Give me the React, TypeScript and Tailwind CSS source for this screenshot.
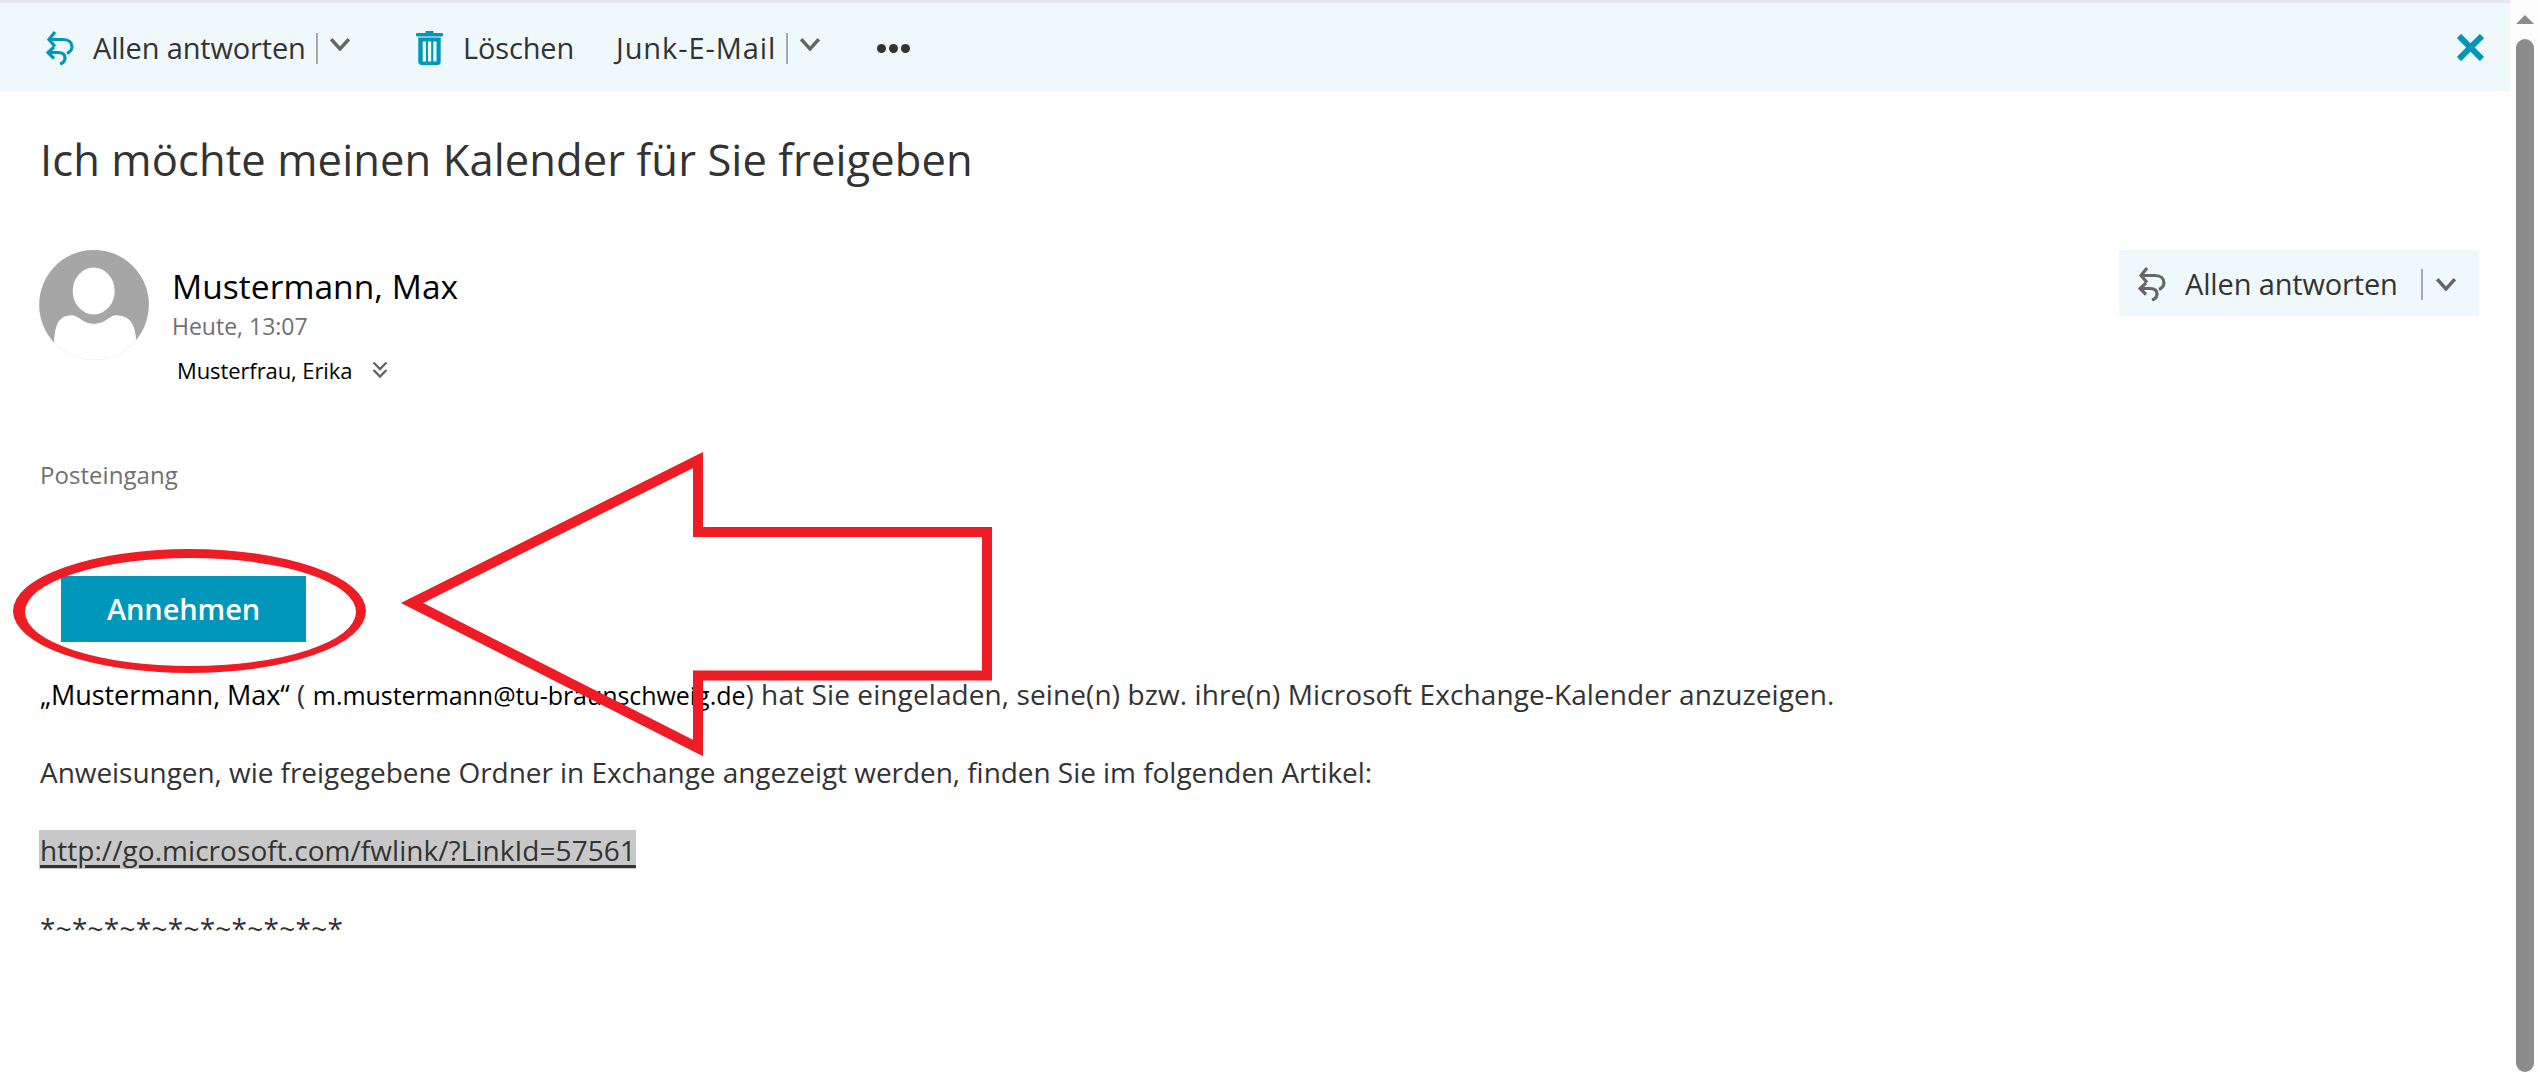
const Reply = ({ className }: { className: string }) => (
  <svg viewBox="0 0 28 34" fill="none" stroke="currentColor" strokeWidth="3.2" className={className}>
    <path d="M9 1 3 8.500 9 15.500" />
    <path d="M3 8.500H17C23 8.500 26 12 26 16 26 19 24 21 21 22.500" />
    <path d="M8 16 2 21.500 8 27.500" />
    <path d="M2 21.500H12C17 21.500 19 24 19 27 19 30 17 32 14 33" />
  </svg>
);

const Chevron = ({ className }: { className: string }) => (
  <svg viewBox="0 0 20 13" fill="none" stroke="currentColor" strokeWidth="3.4" className={className}>
    <path d="M1.200 1.200 10 11l8.800-9.800" />
  </svg>
);

const Trash = () => (
  <svg viewBox="0 0 27 34" fill="#0097bb" className="block h-[34px] w-[27px]">
    <path d="M9.500 0h8v2h8a1.500 1.500 0 0 1 0 3.500H1.500a1.500 1.500 0 0 1 0-3.500h8z" />
    <path
      fillRule="evenodd"
      d="M2.300 6.500H24.700V30.500A3.500 3.500 0 0 1 21.200 34H5.800A3.500 3.500 0 0 1 2.300 30.500zM6.700 10.500V30.500H10V10.500zM12 10.500V30.500H15.200V10.500zM17.300 10.500V30.500H20.500V10.500z"
    />
  </svg>
);

const Avatar = () => (
  <svg viewBox="0 0 110 110" className="block h-[110px] w-[110px] shrink-0">
    <circle cx="55" cy="55" r="55" fill="#e6e6e6" />
    <path
      d="M15.300 92.500A54.800 54.800 0 1 1 97 90C96 74 91 66 78 65.500 70 65 68 73.500 55 74 42 73.500 40 65 32 65.500 20 66 16 74 15.300 92.500z"
      fill="#a6a6a6"
    />
    <path d="M15.300 92.500C16 74 20 66 32 65.500 40 65 42 73.500 55 74 68 73.500 70 65 78 65.500 91 66 96 74 97 90A54.500 54.500 0 0 1 15.300 92.500z" fill="#fff" />
    <ellipse cx="54.700" cy="41" rx="21" ry="23.500" fill="#fff" />
  </svg>
);

export default function App() {
  return (
    <div className="relative flex h-[1072px] w-[2540px] overflow-hidden bg-white font-['Open_Sans',sans-serif]">
      <main className="flex w-[2510px] flex-col">
        <div className="h-[3px] bg-[#e4e8ea]" />
        <header className="flex h-[88px] items-center bg-[#eff8fb] pt-[2px] text-[29px] tracking-[-0.15px] text-[#333333]">
          <Reply className="ml-[46px] h-[34px] w-[28px] text-[#0097bb]" />
          <span className="ml-[19px] w-[213px] whitespace-nowrap">Allen antworten</span>
          <span className="ml-[10px] h-[31px] w-[2px] bg-[#a9a9a9]" />
          <Chevron className="mb-[8px] ml-[12px] h-[13px] w-[20px] text-[#666666]" />
          <span className="ml-[66px]"><Trash /></span>
          <span className="ml-[20px] w-[110px] whitespace-nowrap">Löschen</span>
          <span className="ml-[43px] w-[160px] whitespace-nowrap tracking-[0.9px]">Junk-E-Mail</span>
          <span className="ml-[10px] h-[31px] w-[2px] bg-[#a9a9a9]" />
          <Chevron className="mb-[8px] ml-[12px] h-[13px] w-[20px] text-[#666666]" />
          <span className="ml-[57px] flex gap-[3px]">
            <span className="h-[9px] w-[9px] rounded-full bg-[#333333]" />
            <span className="h-[9px] w-[9px] rounded-full bg-[#333333]" />
            <span className="h-[9px] w-[9px] rounded-full bg-[#333333]" />
          </span>
          <svg viewBox="0 0 27 27" fill="none" stroke="#0097bb" strokeWidth="6" className="mb-[2px] ml-auto mr-[26px] h-[27px] w-[27px]">
            <path d="M2 2l23 23M25 2 2 25" />
          </svg>
        </header>

        <div className="flex flex-col pl-[40px] pr-[31px]">
          <h1 className="mt-[38px] h-[62px] whitespace-nowrap text-[43.5px] font-normal leading-[62px] tracking-[0.1px] text-[#333333]">
            Ich möchte meinen Kalender für Sie freigeben
          </h1>

          <div className="mt-[59px] flex items-start">
            <span className="-ml-[1px]"><Avatar /></span>
            <div className="ml-[23px] flex flex-col">
              <span className="mt-[14px] h-[44px] whitespace-nowrap text-[33.5px] leading-[44px] tracking-[0.05px] text-black">Mustermann, Max</span>
              <span className="mt-[2px] h-[32px] whitespace-nowrap text-[23px] leading-[32px] text-[#707070]">Heute, 13:07</span>
              <div className="mt-[13px] flex items-center pl-[5px]">
                <span className="w-[177px] whitespace-nowrap text-[22px] leading-[30px] tracking-[-0.1px] text-black">Musterfrau, Erika</span>
                <svg viewBox="0 0 16 18" fill="none" stroke="#666666" strokeWidth="2.400" className="ml-[18px] h-[18px] w-[16px]">
                  <path d="M1.500 1.500 8 8l6.500-6.500M1.500 9 8 15.500 14.500 9" />
                </svg>
              </div>
            </div>
            <div className="ml-auto flex h-[66px] w-[360px] items-center bg-[#eff8fb] pt-[2px] text-[29px] tracking-[-0.15px] text-[#333333]">
              <Reply className="ml-[19px] h-[34px] w-[28px] text-[#666666]" />
              <span className="ml-[19px] w-[214px] whitespace-nowrap">Allen antworten</span>
              <span className="ml-[22px] h-[31px] w-[2px] bg-[#a9a9a9]" />
              <Chevron className="ml-[13px] h-[13px] w-[20px] text-[#666666]" />
            </div>
          </div>

          <p className="mt-[74px] h-[32px] whitespace-nowrap text-[24px] leading-[32px] tracking-[0.05px] text-[#707070]">Posteingang</p>

          <button className="ml-[21px] mt-[85px] flex h-[66px] w-[245px] items-center justify-center bg-[#0097bb] text-[29px] font-semibold tracking-[-0.1px] text-white">
            Annehmen
          </button>

          <p className="mt-[32px] h-[40px] whitespace-nowrap text-[28px] leading-[40px] tracking-[0.1px] text-[#333333]">
            <span className="text-[27px] tracking-[-0.05px] text-black">„Mustermann, Max“</span> ( <span className="text-[25px] tracking-[-0.05px] text-black">m.mustermann@tu-braunschweig.de</span>) hat Sie eingeladen, seine(n) bzw. ihre(n) Microsoft Exchange-Kalender anzuzeigen.
          </p>
          <p className="mt-[38px] h-[40px] whitespace-nowrap text-[28px] leading-[40px] tracking-[-0.05px] text-[#333333]">
            Anweisungen, wie freigegebene Ordner in Exchange angezeigt werden, finden Sie im folgenden Artikel:
          </p>
          <p className="mt-[38px] flex h-[39px] whitespace-nowrap">
            <a className="-ml-[1px] block h-[39px] w-[597px] bg-[#c8c8c8] pl-[1px] text-[28px] leading-[40px] tracking-[0.05px] text-[#333333] underline decoration-[3px] underline-offset-[4px]">
              http://go.microsoft.com/fwlink/?LinkId=57561
            </a>
          </p>
          <p className="mt-[39px] h-[40px] whitespace-nowrap text-[28px] leading-[40px] tracking-[0.25px] text-[#333333]">*~*~*~*~*~*~*~*~*~*</p>
        </div>
      </main>

      <aside className="flex w-[30px] flex-col items-center bg-[#fdfdfd] pt-[15px]">
        <div className="h-0 w-0 border-x-[9px] border-b-[9px] border-x-transparent border-b-[#8c8c8c]" />
        <div className="mt-[15px] h-[1100px] w-[18px] rounded-full bg-[#8c8c8c]" />
      </aside>

      <svg className="pointer-events-none absolute left-0 top-0 h-[1072px] w-[2540px]" viewBox="0 0 2540 1072" fill="#ee1c25">
        <path
          fillRule="evenodd"
          d="M13 611A176.500 62 0 0 1 366 611 176.500 62 0 0 1 13 611zM25 612A165.500 54 0 0 0 356 612 165.500 54 0 0 0 25 612z"
        />
        <path
          d="M412 603 698 460V532H987V675.500H698V748z"
          fill="none"
          stroke="#ee1c25"
          strokeWidth="10"
          strokeLinejoin="miter"
          strokeMiterlimit="10"
        />
      </svg>
    </div>
  );
}
